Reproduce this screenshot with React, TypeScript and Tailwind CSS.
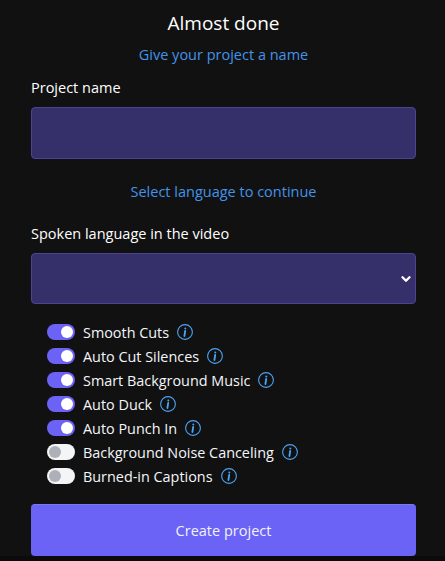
import { ChevronDown } from "lucide-react"

const options = [
  { label: "Smooth Cuts", on: true },
  { label: "Auto Cut Silences", on: true },
  { label: "Smart Background Music", on: true },
  { label: "Auto Duck", on: true },
  { label: "Auto Punch In", on: true },
  { label: "Background Noise Canceling", on: false },
  { label: "Burned-in Captions", on: false },
]

function InfoIcon() {
  return (
    <svg viewBox="0 0 16 16" className="w-4 h-4 shrink-0 text-[#4ba3f5]" fill="none" stroke="currentColor">
      <circle cx="8" cy="8" r="7.4" strokeWidth="1.1" />
      <circle cx="8.3" cy="4.6" r="1" fill="currentColor" stroke="none" />
      <path d="M8.2 7 L7.4 12" strokeWidth="1.8" strokeLinecap="round" />
    </svg>
  )
}

function Toggle({ on }: { on: boolean }) {
  return (
    <div className={`w-7 h-4 rounded-full flex items-center px-[2px] shrink-0 ${on ? "bg-[#6c63f6] justify-end" : "bg-[#f4f5f7] justify-start"}`}>
      <div className={`w-3 h-3 rounded-full ${on ? "bg-white" : "bg-[#adb1b7]"}`} />
    </div>
  )
}

export default function App() {
  return (
    <div className="w-[445px] h-[561px] overflow-hidden bg-[#111111] text-white font-['Open_Sans',sans-serif] flex flex-col">
      <div className="h-[556px] shrink-0 pl-[31px] pr-[29px] flex flex-col">
        <h1 className="h-[24px] mt-[11px] text-center text-[19px] leading-[24px] font-normal">Almost done</h1>
        <p className="h-[20px] mt-[10px] text-center text-[14.5px] leading-[20px] text-[#4493ea]">Give your project a name</p>
        <label className="h-[20px] mt-[13px] text-[14.5px] leading-[20px]">Project name</label>
        <div className="h-[52px] mt-[9px] rounded bg-[#36306a] border border-[#4b4495]" />
        <p className="h-[20px] mt-[23px] text-center text-[14.5px] leading-[20px] text-[#4493ea]">Select language to continue</p>
        <label className="h-[20px] mt-[21px] text-[14.5px] leading-[20px] pt-px">Spoken language in the video</label>
        <div className="h-[51px] mt-[10px] rounded bg-[#36306a] border border-[#4b4495] flex items-center justify-end pr-[2px]">
          <ChevronDown className="w-[14px] h-[14px] text-white" strokeWidth={4} />
        </div>
        <div className="mt-[16px] pl-4 flex flex-col">
          {options.map((o) => (
            <div key={o.label} className="h-6 flex items-center">
              <Toggle on={o.on} />
              <span className="ml-2 text-[14.4px] leading-6 pt-px text-[#f4f6fa]">{o.label}</span>
              <span className="ml-2">
                <InfoIcon />
              </span>
            </div>
          ))}
        </div>
        <button className="h-[52px] mt-[16px] rounded bg-[#6a63f5] border-t border-[#7d77f7] text-[14.5px] text-[#f2f1fe]">Create project</button>
      </div>
      <div className="flex-1 bg-[#0b0b0d]" />
    </div>
  )
}
